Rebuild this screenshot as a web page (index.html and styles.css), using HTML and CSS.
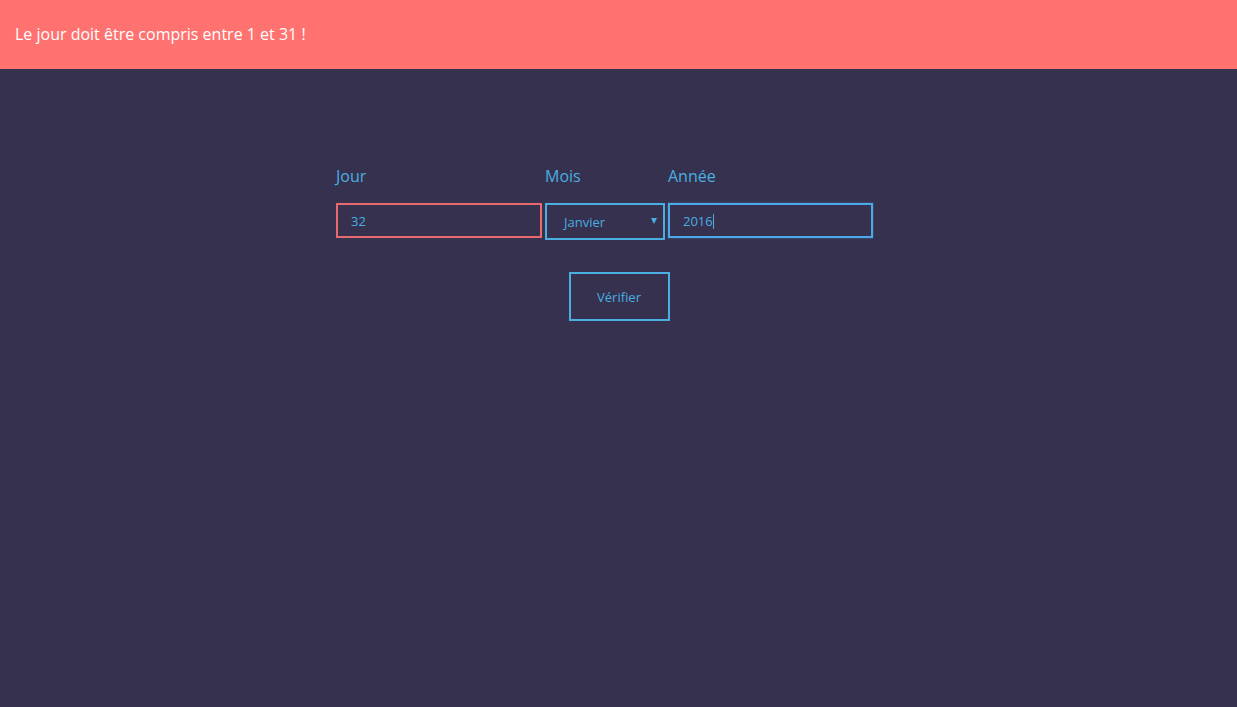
FILE: index.html
```html
<!DOCTYPE html>
<html lang="fr">
<head>
<meta charset="utf-8">
<title>Date</title>
<link rel="stylesheet" href="styles.css">
</head>
<body>
<div class="alert">Le jour doit être compris entre 1 et 31 !</div>
<main class="form">
  <div class="fields">
    <div class="field field-day">
      <label class="label">Jour</label>
      <div class="input input-error">32</div>
    </div>
    <div class="field field-month">
      <label class="label">Mois</label>
      <div class="select">Janvier<span class="caret"></span></div>
    </div>
    <div class="field field-year">
      <label class="label">Année</label>
      <div class="input input-focus">2016<span class="cursor"></span></div>
    </div>
  </div>
  <div class="actions">
    <button class="btn">Vérifier</button>
  </div>
</main>
</body>
</html>
```

FILE: styles.css
```css
html, body {
  margin: 0;
  padding: 0;
}
body {
  background: #35314f;
  font-family: "Open Sans", "Liberation Sans", sans-serif;
  width: 1237px;
  height: 707px;
  overflow: hidden;
}
.alert {
  background: #ff7270;
  color: #ffffff;
  font-size: 16px;
  height: 69px;
  line-height: 68px;
  padding-left: 15px;
  box-sizing: border-box;
}
.form {
  padding-top: 96px;
}
.fields {
  display: flex;
  gap: 3px;
  padding-left: 336px;
}
.field {
  display: flex;
  flex-direction: column;
}
.label {
  color: #4aaee0;
  font-size: 16px;
  line-height: 22px;
  height: 22px;
  margin-bottom: 16px;
}
.input, .select {
  box-sizing: border-box;
  height: 35px;
  border: 2px solid #4aaee0;
  color: #4aaee0;
  font-size: 13px;
  line-height: 33px;
  padding-left: 13px;
  position: relative;
}
.field-day .input { width: 206px; }
.input-error { border-color: #e8696e; }
.select {
  width: 120px;
  height: 37px;
  line-height: 34px;
  padding-left: 17px;
}
.caret {
  position: absolute;
  right: 6px;
  top: 13px;
  width: 0;
  height: 0;
  border-left: 3px solid transparent;
  border-right: 3px solid transparent;
  border-top: 6px solid #4aaee0;
}
.field-year .input { width: 205px; }
.input-focus {
  border-color: #4aa9e6;
  line-height: 32px;
  box-shadow: 0 0 1px #4aa9e6;
}
.cursor {
  display: inline-block;
  width: 1px;
  height: 15px;
  background: #4aaee0;
  vertical-align: middle;
  position: relative;
  top: -1px;
}
.actions {
  display: flex;
  justify-content: center;
  padding-top: 32px;
  padding-left: 1px;
}
.btn {
  background: transparent;
  border: 2px solid #4aaee0;
  color: #4aaee0;
  font-family: inherit;
  font-size: 13px;
  width: 101px;
  height: 49px;
  padding: 0;
  cursor: pointer;
}
```
